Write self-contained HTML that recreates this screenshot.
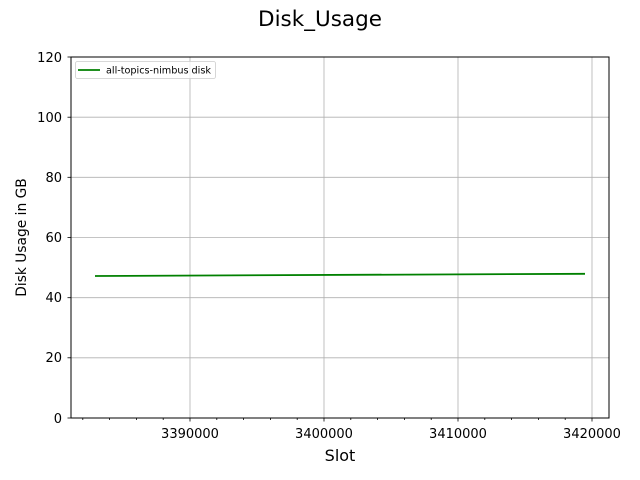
<!DOCTYPE html>
<html><head><style>body{margin:0;background:#fff}svg{display:block}text{font-family:"DejaVu Sans",sans-serif}</style></head><body>
<svg width="640" height="480" xmlns="http://www.w3.org/2000/svg">
<rect width="640" height="480" fill="#fff"/>
<text x="320" y="26" font-size="21.5" text-anchor="middle">Disk_Usage</text>
<g stroke="#b0b0b0" stroke-width="0.8">
<line x1="190" y1="57" x2="190" y2="418"/><line x1="324" y1="57" x2="324" y2="418"/><line x1="458" y1="57" x2="458" y2="418"/><line x1="592" y1="57" x2="592" y2="418"/>
<line x1="71" y1="117.2" x2="609" y2="117.2"/><line x1="71" y1="177.3" x2="609" y2="177.3"/><line x1="71" y1="237.5" x2="609" y2="237.5"/><line x1="71" y1="297.7" x2="609" y2="297.7"/><line x1="71" y1="357.8" x2="609" y2="357.8"/>
</g>
<polyline points="95,276 585,273.8" fill="none" stroke="#008000" stroke-width="1.8"/>
<rect x="71" y="57" width="538" height="361" fill="none" stroke="#000" stroke-width="1"/>
<g stroke="#000" stroke-width="0.8">
<line x1="190" y1="418" x2="190" y2="421.5"/><line x1="324" y1="418" x2="324" y2="421.5"/><line x1="458" y1="418" x2="458" y2="421.5"/><line x1="592" y1="418" x2="592" y2="421.5"/>
<line x1="82.8" y1="418" x2="82.8" y2="420"/><line x1="109.6" y1="418" x2="109.6" y2="420"/><line x1="136.4" y1="418" x2="136.4" y2="420"/><line x1="163.2" y1="418" x2="163.2" y2="420"/>
<line x1="216.8" y1="418" x2="216.8" y2="420"/><line x1="243.6" y1="418" x2="243.6" y2="420"/><line x1="270.4" y1="418" x2="270.4" y2="420"/><line x1="297.2" y1="418" x2="297.2" y2="420"/>
<line x1="350.8" y1="418" x2="350.8" y2="420"/><line x1="377.6" y1="418" x2="377.6" y2="420"/><line x1="404.4" y1="418" x2="404.4" y2="420"/><line x1="431.2" y1="418" x2="431.2" y2="420"/>
<line x1="484.8" y1="418" x2="484.8" y2="420"/><line x1="511.6" y1="418" x2="511.6" y2="420"/><line x1="538.4" y1="418" x2="538.4" y2="420"/><line x1="565.2" y1="418" x2="565.2" y2="420"/>
<line x1="67.5" y1="57" x2="71" y2="57"/><line x1="67.5" y1="117.2" x2="71" y2="117.2"/><line x1="67.5" y1="177.3" x2="71" y2="177.3"/><line x1="67.5" y1="237.5" x2="71" y2="237.5"/><line x1="67.5" y1="297.7" x2="71" y2="297.7"/><line x1="67.5" y1="357.8" x2="71" y2="357.8"/><line x1="67.5" y1="418" x2="71" y2="418"/>
</g>
<g font-size="13" text-anchor="middle">
<text x="190" y="438">3390000</text><text x="324" y="438">3400000</text><text x="458" y="438">3410000</text><text x="592" y="438">3420000</text>
</g>
<g font-size="13" text-anchor="end">
<text x="62" y="62">120</text><text x="62" y="122">100</text><text x="62" y="182">80</text><text x="62" y="242">60</text><text x="62" y="302">40</text><text x="62" y="362">20</text><text x="62" y="423">0</text>
</g>
<text x="340" y="461" font-size="16" text-anchor="middle">Slot</text>
<text transform="translate(26,237.5) rotate(-90)" font-size="13.8" text-anchor="middle">Disk Usage in GB</text>
<rect x="75.5" y="61.5" width="140" height="17" rx="2" fill="#fff" fill-opacity="0.8" stroke="#ccc" stroke-width="0.8"/>
<line x1="78" y1="70" x2="100" y2="70" stroke="#008000" stroke-width="1.8"/>
<text x="106" y="73.5" font-size="9.7" textLength="105">all-topics-nimbus disk</text>
</svg>
</body></html>
